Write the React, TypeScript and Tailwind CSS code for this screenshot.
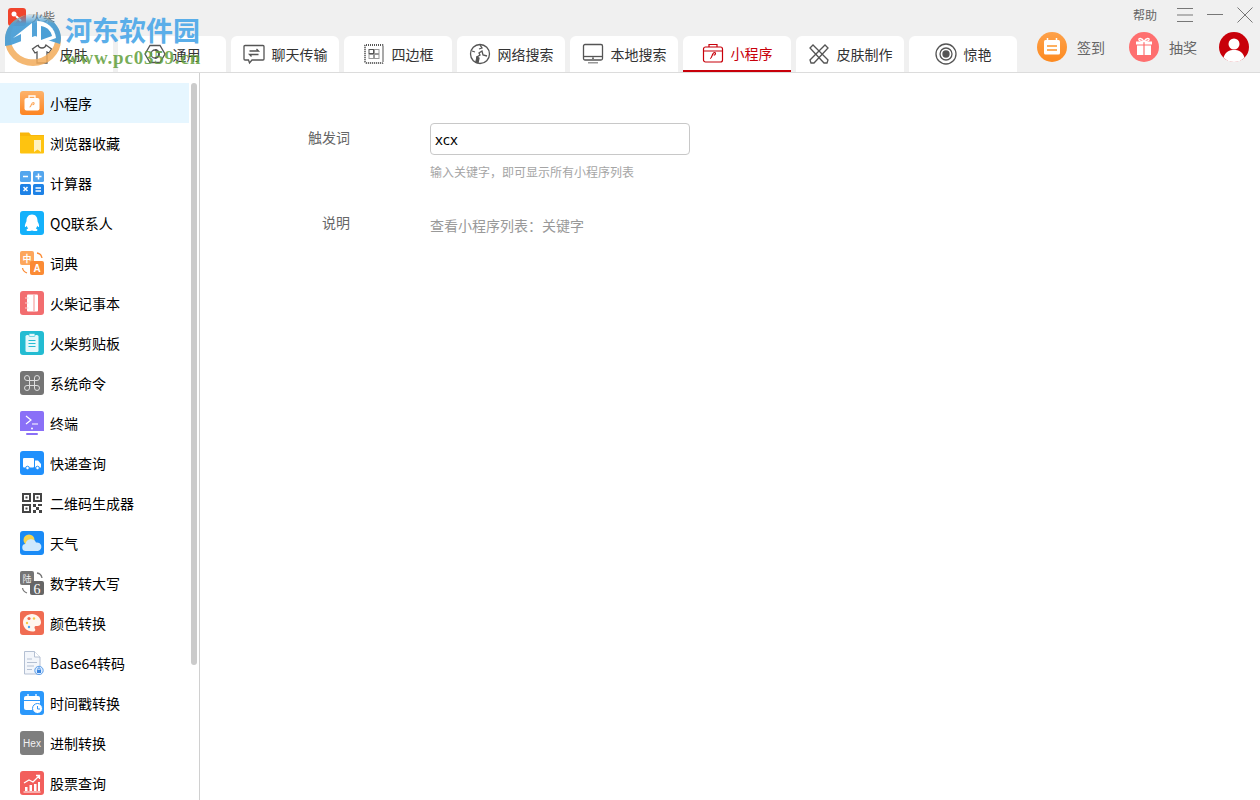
import type { ReactNode } from 'react'

function Square({ className, children }: { className: string; children: ReactNode }) {
  return (
    <svg viewBox="0 0 24 24" className="w-6 h-6 shrink-0">
      <rect width="24" height="24" rx="3" className={className} />
      {children}
    </svg>
  )
}

const sideItems: { label: string; icon: ReactNode }[] = [
  {
    label: '小程序',
    icon: (
      <svg viewBox="0 0 24 24" className="w-6 h-6 shrink-0">
        <defs>
          <linearGradient id="mp" x1="0" y1="0" x2="0" y2="1">
            <stop offset="0" stopColor="#fdb36b" />
            <stop offset="1" stopColor="#fd8421" />
          </linearGradient>
        </defs>
        <rect width="24" height="24" rx="3" fill="url(#mp)" />
        <rect x="4.500" y="7" width="15" height="12.500" rx="2" fill="#fff" />
        <path d="M9 7V5h6v2" fill="none" stroke="#fff" strokeWidth="1.300" />
        <path d="M9.500 16c2 .3 1.500-4.500 3.700-4.500 1.300 0 1.200 2-.7 2.200" fill="none" stroke="#fda85c" strokeWidth="1.200" />
      </svg>
    ),
  },
  {
    label: '浏览器收藏',
    icon: (
      <svg viewBox="0 0 24 24" className="w-6 h-6 shrink-0">
        <path d="M0 1.500h9l2 2.500h13v2H0z" fill="#f8b60c" />
        <path d="M0 5h24v16.500a1 1 0 0 1-1 1H1a1 1 0 0 1-1-1z" fill="#fec310" />
        <path d="M14 9h7v12l-3.500-2.500L14 21z" fill="#fff1c2" />
      </svg>
    ),
  },
  {
    label: '计算器',
    icon: (
      <svg viewBox="0 0 24 24" className="w-6 h-6 shrink-0">
        <rect width="11" height="11" rx="1.500" fill="#54a6ee" />
        <rect x="13" width="11" height="11" rx="1.500" fill="#54a6ee" />
        <rect y="13" width="11" height="11" rx="1.500" fill="#1e82e6" />
        <rect x="13" y="13" width="11" height="11" rx="1.500" fill="#1e82e6" />
        <path d="M3 5.500h5M15.500 5.500h6M18.500 2.500v6M3.500 16l4 4M7.500 16l-4 4M15.500 17h5.500M15.500 20h5.500" stroke="#fff" strokeWidth="1.500" />
      </svg>
    ),
  },
  {
    label: 'QQ联系人',
    icon: (
      <Square className="fill-[#14b1fb]">
        <path d="M12 3.500c3.800 0 5.500 3 5.500 6 0 1 .4 1.700 1 3 .7 1.500.8 3.300.3 3.500-.4.200-1-.5-1.500-1.300-.3 1.200-.8 2.100-1.500 2.700 1 .4 1.700 1 1.700 1.500 0 1-2 1.300-3.500 1.100-.9-.1-1.500-.4-2-.6-.5.200-1.100.5-2 .6-1.500.2-3.500-.1-3.500-1.100 0-.5.700-1.100 1.700-1.500-.7-.6-1.200-1.500-1.500-2.700-.5.800-1.100 1.500-1.500 1.300-.5-.2-.4-2 .3-3.500.6-1.300 1-2 1-3 0-3 1.700-6 5.500-6z" fill="#fff" />
      </Square>
    ),
  },
  {
    label: '词典',
    icon: (
      <svg viewBox="0 0 24 24" className="w-6 h-6 shrink-0">
        <rect width="14" height="14" rx="2" fill="#fda65c" />
        <rect x="10" y="10" width="14" height="14" rx="2" fill="#fb8b35" />
        <text x="7" y="10.500" textAnchor="middle" fontSize="9" fontWeight="700" fill="#fff" fontFamily="'Noto Sans CJK SC', sans-serif">中</text>
        <text x="17" y="21" textAnchor="middle" fontSize="10" fontWeight="700" fill="#fff" fontFamily="'Liberation Sans', sans-serif">A</text>
        <path d="M17 2c2.500.3 4.500 2.200 5 5M2.500 17c.4 2.500 2 4 4.500 5" fill="none" stroke="#fb8b35" strokeWidth="1.300" />
      </svg>
    ),
  },
  {
    label: '火柴记事本',
    icon: (
      <Square className="fill-[#f26d6f]">
        <rect x="7" y="3.500" width="11" height="17" rx="1" fill="#fff" />
        <path d="M14 3.500v17" stroke="#f9b4b5" strokeWidth="1.500" />
        <path d="M5 7h3.500M5 12h3.500M5 17h3.500" stroke="#fbd0d0" strokeWidth="1.200" />
      </Square>
    ),
  },
  {
    label: '火柴剪贴板',
    icon: (
      <Square className="fill-[#23bcd2]">
        <rect x="5.500" y="4" width="13" height="17" rx="1.500" fill="#e5f8fb" />
        <rect x="9" y="2.500" width="6" height="3" rx="1" fill="#e5f8fb" stroke="#23bcd2" strokeWidth=".6" />
        <path d="M8.500 9.500h7M8.500 12.500h7M8.500 15.500h7" stroke="#23bcd2" strokeWidth="1.200" />
      </Square>
    ),
  },
  {
    label: '系统命令',
    icon: (
      <Square className="fill-[#757575]">
        <path d="M9.500 9.500V7a2.500 2.500 0 1 0-2.500 2.500h10A2.500 2.500 0 1 0 14.500 7v10a2.500 2.500 0 1 0 2.500-2.500H7A2.500 2.500 0 1 0 9.500 17z" fill="none" stroke="#ddd" strokeWidth="1" />
      </Square>
    ),
  },
  {
    label: '终端',
    icon: (
      <svg viewBox="0 0 24 24" className="w-6 h-6 shrink-0">
        <path d="M0 2a2 2 0 0 1 2-2h20a2 2 0 0 1 2 2v18H0z" fill="#8a70f7" />
        <rect x="6" y="22" width="12" height="2" rx="1" fill="#8a70f7" />
        <path d="M6 5l5 4-5 4M12 13h6" fill="none" stroke="#fff" strokeWidth="1.200" />
        <circle cx="12" cy="17.500" r="1" fill="#fff" />
      </svg>
    ),
  },
  {
    label: '快递查询',
    icon: (
      <Square className="fill-[#2090fc]">
        <rect x="3" y="7" width="11" height="9.500" rx="1" fill="#fff" />
        <path d="M15 9.500h3l3 3.500v3.500h-6z" fill="#fff" />
        <circle cx="7.500" cy="17" r="1.800" fill="#fff" stroke="#2090fc" />
        <circle cx="17.500" cy="17" r="1.800" fill="#fff" stroke="#2090fc" />
      </Square>
    ),
  },
  {
    label: '二维码生成器',
    icon: (
      <svg viewBox="0 0 24 24" className="w-6 h-6 shrink-0">
        <path d="M2 2h9v9H2zM13 2h9v9h-9zM2 13h9v9H2z" fill="#444" />
        <path d="M4 4h5v5H4zM15 4h5v5h-5zM4 15h5v5H4z" fill="#fff" />
        <path d="M5.500 5.500h2v2h-2zM16.500 5.500h2v2h-2zM5.500 16.500h2v2h-2z" fill="#444" />
        <path d="M13 13h3v3h-3zM18 13h4v2h-4zM16 16h3v3h-3zM13 19h3v3h-3zM19 19h3v3h-3z" fill="#444" />
      </svg>
    ),
  },
  {
    label: '天气',
    icon: (
      <Square className="fill-[#1a8bf6]">
        <circle cx="9" cy="9" r="5.500" fill="#f6d44f" />
        <path d="M6 20a3.500 3.500 0 0 1-.5-7 5.500 5.500 0 0 1 10.500-1.500A4.300 4.300 0 0 1 18 20z" fill="#cfe9fd" />
      </Square>
    ),
  },
  {
    label: '数字转大写',
    icon: (
      <svg viewBox="0 0 24 24" className="w-6 h-6 shrink-0">
        <rect width="14" height="14" rx="2" fill="#757575" />
        <rect x="10" y="10" width="14" height="14" rx="2" fill="#666" />
        <text x="7" y="10.500" textAnchor="middle" fontSize="9" fill="#eee" fontFamily="'Noto Sans CJK SC', sans-serif">陆</text>
        <text x="17" y="22.500" textAnchor="middle" fontSize="14" fill="#fff" fontFamily="'Liberation Serif', serif">6</text>
        <path d="M17 2c2.500.3 4.500 2.200 5 5M2.500 17c.4 2.500 2 4 4.500 5" fill="none" stroke="#777" strokeWidth="1.300" />
      </svg>
    ),
  },
  {
    label: '颜色转换',
    icon: (
      <Square className="fill-[#f06c52]">
        <path d="M12 3c5 0 9 3.800 9 8.500 0 2.500-1.800 3.500-3.500 3.500-1.500 0-3-.3-3 1.500 0 1 .8 1.500.8 2.500 0 1.200-1.200 1.500-2.800 1.500C7 20.500 3 16.500 3 11.500S7 3 12 3z" fill="#fff6ee" />
        <circle cx="9" cy="7.500" r="1.600" fill="#f06c52" />
        <circle cx="14" cy="7.500" r="1.200" fill="#f7c844" />
        <circle cx="7" cy="12" r="1.200" fill="#f7c844" />
        <circle cx="9" cy="16" r="1.200" fill="#46a6f0" />
      </Square>
    ),
  },
  {
    label: 'Base64转码',
    icon: (
      <svg viewBox="0 0 24 24" className="w-6 h-6 shrink-0">
        <path d="M4.500.500h10L20 6v17H4.500z" fill="#f3f6fb" stroke="#b4c0d3" />
        <path d="M14.500.500V6H20" fill="#fff" stroke="#b4c0d3" />
        <path d="M7 8h5M7 11.500h10M7 15h7M7 18.500h5" stroke="#b4c0d3" />
        <circle cx="19" cy="19.500" r="4.200" fill="#dcecff" stroke="#5d9ee8" />
        <rect x="17" y="19" width="4" height="3" fill="#3b86e0" />
        <path d="M17.800 19v-1a1.200 1.200 0 0 1 2.400 0v1" fill="none" stroke="#3b86e0" strokeWidth=".8" />
      </svg>
    ),
  },
  {
    label: '时间戳转换',
    icon: (
      <Square className="fill-[#2b98fb]">
        <path d="M4 7a2 2 0 0 1 2-2h12a2 2 0 0 1 2 2v10a2 2 0 0 1-2 2H6a2 2 0 0 1-2-2z" fill="#fff" />
        <path d="M4 9.500h16" stroke="#2b98fb" />
        <path d="M8 3v3.500M16 3v3.500" stroke="#fff" strokeWidth="1.300" />
        <circle cx="17.500" cy="17.500" r="5" fill="#fff" stroke="#2b98fb" />
        <path d="M17.500 15v3h2.500" fill="none" stroke="#2b98fb" />
      </Square>
    ),
  },
  {
    label: '进制转换',
    icon: (
      <Square className="fill-[#7e7e7e]">
        <text x="12" y="15.500" textAnchor="middle" fontSize="10" fill="#f2f2f2" fontFamily="'Liberation Sans', sans-serif">Hex</text>
      </Square>
    ),
  },
  {
    label: '股票查询',
    icon: (
      <Square className="fill-[#f25f5c]">
        <path d="M4 12l5-3 4 2 6-6M16 4.500h3.500V8" fill="none" stroke="#fff" strokeWidth="1.300" />
        <path d="M5 16h2.500v4H5zM9.500 14h2.500v6H9.500zM14 13h2.500v7H14zM18 11h2v9h-2z" fill="#fff" />
        <path d="M3.500 21h17" stroke="#fff" />
      </Square>
    ),
  },
]

const line = { fill: 'none', stroke: '#555', strokeWidth: 1.300 }

const tabs: { label: string; active?: boolean; icon: ReactNode }[] = [
  {
    label: '皮肤',
    icon: (
      <svg viewBox="0 0 22 22" className="w-[22px] h-[22px]" {...line}>
        <path d="M7 2L1.500 6l2.500 4 2-1v11h10V9l2 1 2.500-4L15 2c-.5 2-2 3-4 3S7.500 4 7 2z" />
      </svg>
    ),
  },
  {
    label: '通用',
    icon: (
      <svg viewBox="0 0 22 22" className="w-[22px] h-[22px]" {...line}>
        <path d="M6 2.500h10l5 8.500-5 8.500H6L1 11z" />
        <circle cx="11" cy="11" r="4" />
        <path d="M11 7a4 4 0 0 1 0 8" strokeWidth="2" />
      </svg>
    ),
  },
  {
    label: '聊天传输',
    icon: (
      <svg viewBox="0 0 22 22" className="w-[22px] h-[22px]" {...line}>
        <path d="M2 2.500h18a1 1 0 0 1 1 1V16a1 1 0 0 1-1 1H9l-2.500 3-1-3H2a1 1 0 0 1-1-1V3.500a1 1 0 0 1 1-1z" />
        <path d="M6.500 8h9l-2-2M15.500 11.500h-9l2 2" />
      </svg>
    ),
  },
  {
    label: '四边框',
    icon: (
      <svg viewBox="0 0 22 22" className="w-[22px] h-[22px]" fill="none" stroke="#555">
        <rect x="2" y="2" width="18" height="18" rx="1" strokeWidth="2" strokeDasharray="1 1" />
        <rect x="6" y="6.500" width="4.500" height="4" />
        <rect x="11.500" y="6.500" width="4.500" height="4" stroke="#999" />
        <rect x="6" y="11.500" width="4.500" height="4" stroke="#999" />
        <rect x="11.500" y="11.500" width="4.500" height="4" stroke="#999" />
      </svg>
    ),
  },
  {
    label: '网络搜索',
    icon: (
      <svg viewBox="0 0 22 22" className="w-[22px] h-[22px]" {...line}>
        <circle cx="11" cy="11" r="9.500" />
        <path d="M7 20l1-6 3-2-1-2 3-2 1 4 4 1M11 2l2 3-3 1M3 8l3 1" />
        <path d="M8 14l2 1-1 5-2-.5z" fill="#555" />
      </svg>
    ),
  },
  {
    label: '本地搜索',
    icon: (
      <svg viewBox="0 0 22 22" className="w-[22px] h-[22px]">
        <rect x="1.500" y="1.500" width="19" height="15.500" rx="1.500" fill="none" stroke="#555" strokeWidth="1.300" />
        <path d="M1.500 13.500h19" stroke="#555" strokeWidth="1.300" />
        <rect x="10" y="14.500" width="2" height="1.300" fill="#555" />
        <path d="M6 19h10v1.500H6z" fill="#999" />
      </svg>
    ),
  },
  {
    label: '小程序',
    active: true,
    icon: (
      <svg viewBox="0 0 22 22" className="w-[22px] h-[22px]" fill="none" stroke="#c8000a" strokeWidth="1.200">
        <rect x="1.500" y="5" width="19" height="15" rx="2" />
        <path d="M7 5V2.500h8V5M1.500 9h19" />
        <path d="M8 16.500c2 .5 2-6 4.500-6 1.500 0 1.200 2.500-.8 2.700" />
      </svg>
    ),
  },
  {
    label: '皮肤制作',
    icon: (
      <svg viewBox="0 0 22 22" className="w-[22px] h-[22px]" {...line}>
        <path d="M2 5l3-3 15 15-1 3-3 0z" />
        <path d="M20 5l-3-3L2 17l1 3h3z" />
      </svg>
    ),
  },
  {
    label: '惊艳',
    icon: (
      <svg viewBox="0 0 22 22" className="w-[22px] h-[22px]" fill="none" stroke="#555" strokeWidth="1.300">
        <circle cx="11" cy="11" r="10" />
        <circle cx="11" cy="11" r="6" />
        <circle cx="11" cy="11" r="3" fill="#555" />
      </svg>
    ),
  },
]

export default function App() {
  return (
    <div className="relative w-[1260px] h-[800px] overflow-hidden bg-white flex flex-col font-['Noto_Sans_CJK_SC','Noto_Sans',sans-serif]">
      <header className="h-[73px] shrink-0 flex bg-[#f0f0f0] border-b border-[#dcdcdc]">
        <div className="w-[1017px] shrink-0">
          <div className="h-[36px] flex items-start pl-2 pt-2 gap-[5px]">
            <svg viewBox="0 0 18 18" className="w-[18px] h-[18px]">
              <rect width="18" height="18" rx="3" fill="#f0442c" />
              <circle cx="6" cy="6" r="2.500" fill="#fff" />
              <path d="M8 8l5 5" stroke="#fff" strokeWidth="2" />
            </svg>
            <span className="text-xs leading-[18px] text-[#666]">火柴</span>
          </div>
          <nav className="h-[36px] pl-[5px] flex gap-[5px]">
            {tabs.map((tab) => (
              <div
                key={tab.label}
                className={
                  tab.active
                    ? 'w-[108px] flex items-center justify-center gap-[7px] bg-white rounded-t-[6px] border-b-2 border-[#c8000a] text-sm text-[#c8000a]'
                    : 'w-[108px] flex items-center justify-center gap-[7px] bg-white rounded-t-[6px] text-sm text-[#333]'
                }
              >
                {tab.icon}
                <span>{tab.label}</span>
              </div>
            ))}
          </nav>
        </div>
        <div className="flex-1">
          <div className="h-[32px] flex items-start justify-end pt-[6px] pr-[7px] text-[#666]">
            <span className="text-xs leading-[18px] mr-5">帮助</span>
            <svg viewBox="0 0 16 16" className="w-4 h-4 mr-[14px] mt-px" stroke="#777" strokeWidth="1">
              <path d="M0 1.500h16M0 8h16M0 14.500h16" />
            </svg>
            <svg viewBox="0 0 16 16" className="w-4 h-4 mr-[14px] mt-px" stroke="#777" strokeWidth="1">
              <path d="M0 7.500h16" />
            </svg>
            <svg viewBox="0 0 16 16" className="w-4 h-4 mt-px" stroke="#777" strokeWidth="1">
              <path d="M.5.500l15 15M15.500.500l-15 15" />
            </svg>
          </div>
          <div className="flex items-center pl-5 text-sm text-[#666]">
            <svg viewBox="0 0 30 30" className="w-[30px] h-[30px] mr-[10px]">
              <defs>
                <linearGradient id="sign" x1="0" y1="0" x2="0" y2="1">
                  <stop offset="0" stopColor="#fda14a" />
                  <stop offset="1" stopColor="#fd8a20" />
                </linearGradient>
              </defs>
              <circle cx="15" cy="15" r="15" fill="url(#sign)" />
              <rect x="7" y="8" width="16" height="14.500" rx="1.500" fill="#fff" />
              <path d="M10.500 6v4M19.500 6v4" stroke="#fff" strokeWidth="1.500" />
              <path d="M10 14h10M10 18h10" stroke="#fd962e" strokeWidth="1.500" />
            </svg>
            <span className="w-[52px]">签到</span>
            <svg viewBox="0 0 30 30" className="w-[30px] h-[30px] mr-[10px]">
              <circle cx="15" cy="15" r="15" fill="#fe6f6f" />
              <path d="M8 13.500h6.400V23H8zM15.600 13.500H22V23h-6.400zM7 9.500h7.400v3H7zM15.600 9.500H23v3h-7.400z" fill="#fff" />
              <path d="M15 9.500c-2-4-6-3.500-5-1.500.5 1 3 1.500 5 1.500zM15 9.500c2-4 6-3.500 5-1.500-.5 1-3 1.500-5 1.500z" fill="none" stroke="#fff" strokeWidth="1.300" />
            </svg>
            <span className="w-[50px]">抽奖</span>
            <svg viewBox="0 0 30 30" className="w-[30px] h-[30px]">
              <circle cx="15" cy="15" r="15" fill="#c8000a" />
              <circle cx="15" cy="12" r="5.500" fill="#fff" />
              <path d="M4.500 25.500c2-6 6-7.500 10.500-7.500s8.500 1.500 10.500 7.500A14.500 14.500 0 0 1 15 30a14.500 14.500 0 0 1-10.500-4.500z" fill="#fff" />
            </svg>
          </div>
        </div>
      </header>

      <div className="flex-1 flex min-h-0">
        <aside className="w-[200px] shrink-0 flex border-r border-[#d0d0d0] overflow-hidden pt-[10px]">
          <ul className="w-[189px] shrink-0">
            {sideItems.map((item, i) => (
              <li
                key={item.label}
                className={
                  i === 0
                    ? 'h-10 flex items-center pl-5 gap-1.5 text-sm text-black bg-[#e6f6ff]'
                    : 'h-10 flex items-center pl-5 gap-1.5 text-sm text-black'
                }
              >
                {item.icon}
                <span>{item.label}</span>
              </li>
            ))}
          </ul>
          <div className="ml-0.5 w-1.5 h-[582px] rounded-full bg-[#cbcbcb]" />
        </aside>

        <main className="flex-1 pt-[50px] pl-[90px]">
          <div className="flex">
            <label className="w-[60px] text-right text-sm leading-[28px] text-[#666]">触发词</label>
            <div className="ml-20">
              <input
                readOnly
                value="xcx"
                className="block w-[260px] h-8 px-1 rounded border border-[#c8c8c8] bg-white text-[15px] text-black outline-none font-['Open_Sans',sans-serif]"
              />
              <p className="mt-2 text-xs leading-[18px] text-[#a5a5a5]">输入关键字，即可显示所有小程序列表</p>
            </div>
          </div>
          <div className="flex mt-[31px]">
            <label className="w-[60px] text-right text-sm leading-5 text-[#666]">说明</label>
            <p className="ml-20 mt-[3px] text-sm leading-5 text-[#999]">查看小程序列表：关键字</p>
          </div>
        </main>
      </div>

      {/* site watermark sits over the title bar */}
      <div className="absolute left-[5px] top-[14px] flex pointer-events-none">
        <svg viewBox="0 0 56 52" className="w-14 h-[52px]">
          <defs>
            <linearGradient id="wm" x1="0" y1="0" x2="0" y2="1">
              <stop offset="0" stopColor="#4b9fd6" stopOpacity=".15" />
              <stop offset=".3" stopColor="#4b9fd6" stopOpacity=".95" />
              <stop offset="1" stopColor="#4b9fd6" stopOpacity=".95" />
            </linearGradient>
          </defs>
          <path
            fillRule="evenodd"
            d="M56 26a28 26 0 0 1-56 0 28 26 0 0 1 56 0zM50 20a22 24 0 0 0-44 8 22 21 0 0 0 44-8z"
            fill="#f2ab5a"
            opacity=".85"
          />
          <path d="M0 32V26C0 11 13 0 28 0s28 11 28 24c0 2-.5 4-1 6L30 22 6 31z" fill="url(#wm)" />
          <path d="M8 24L27 9v24h-11V20z" fill="#fff" />
          <path d="M32 7c10 0 18 7 19 17l-19 7z" fill="#fff" />
          <path d="M36 12c6 1 10 5 11 10l-11 4z" fill="#4b9fd6" />
        </svg>
        <div className="ml-[4px] font-['Liberation_Serif',serif] font-bold">
          <div className="text-[27px] leading-[32px] text-[#5aaee9] font-['Noto_Sans_CJK_SC',sans-serif]">河东软件园</div>
          <div className="mt-px text-[19px] leading-[22px] tracking-[0.8px] text-[#5f9e3a]/85">www.pc0359.cn</div>
        </div>
      </div>
    </div>
  )
}
